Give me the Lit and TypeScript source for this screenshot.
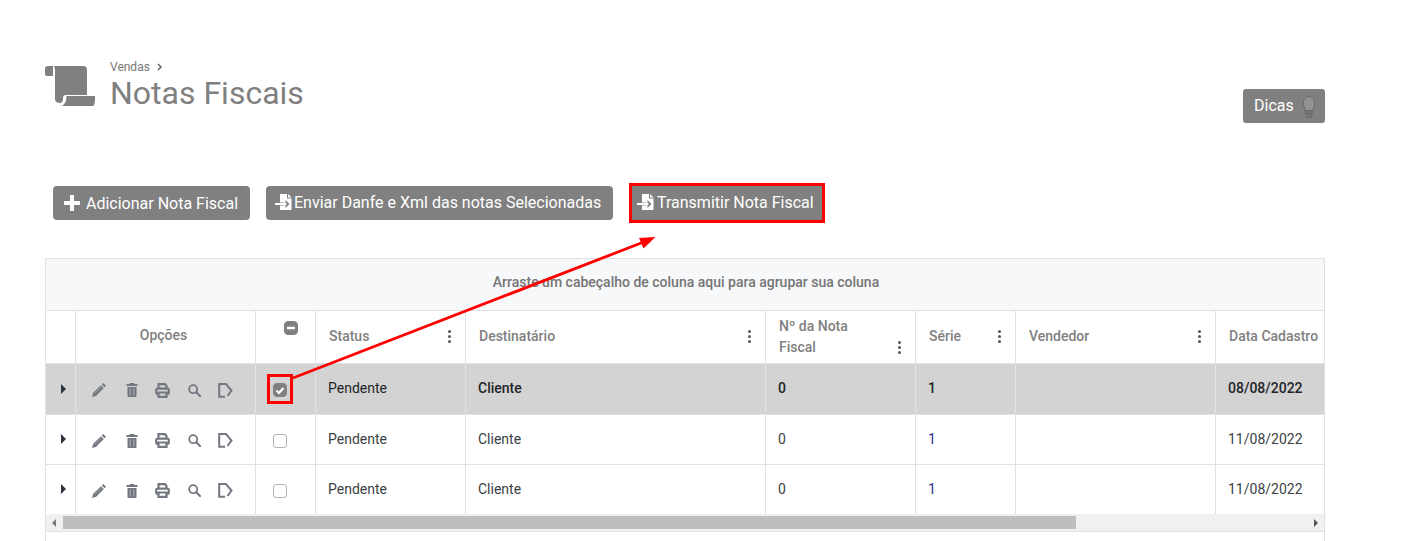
import { LitElement, html, css, svg } from "lit";
import { customElement } from "lit/decorators.js";

const docArrow = html`<svg class="docarrow" viewBox="0 0 18 18" width="18" height="18"><path fill="#fff" d="M5 1h7v4.500h4.500V17H5v-4.500h5.500V15l4-4-4-4v2.500H5z"/><path fill="#fff" d="M13 1l3.500 3.500H13z"/><path fill="#fff" d="M0 10h9V8.500L12 11l-3 2.500V12H0z"/></svg>`;
const plus = html`<svg viewBox="0 0 16 16" width="16" height="16"><path fill="#fff" d="M6 0h4v6h6v4h-6v6H6v-6H0V6h6z"/></svg>`;
const pencil = html`<svg viewBox="0 0 14 14" width="14" height="14"><path fill="#737780" d="M11.200 0L14 2.800l-1.400 1.400-2.800-2.800zM9 2.200l2.800 2.800L4.200 12.800 0 14l1.200-4.200z"/><path stroke="#a9acb2" stroke-width=".8" d="M2.500 10.500L9.800 3.500"/></svg>`;
const trash = html`<svg viewBox="0 0 12 14" width="12" height="14"><path fill="#737780" d="M4 0h4l.5 1H11.500v2H.5V1h3zM1.500 4h9v9a1 1 0 0 1-1 1h-7a1 1 0 0 1-1-1z"/><path stroke="#a5a9b0" stroke-width="1.200" d="M4.200 5.500v7M7.800 5.500v7"/></svg>`;
const printer = html`<svg viewBox="0 0 15 15" width="15" height="15"><path fill="none" stroke="#737780" stroke-width="2.200" d="M3.500 5.500V1.200h6.500L11.500 3v2.500M3.500 11H2.500A1.300 1.300 0 0 1 1.200 9.700V7A1.300 1.300 0 0 1 2.500 5.700h10A1.300 1.300 0 0 1 13.800 7v2.700A1.300 1.300 0 0 1 12.500 11h-1M3.500 9.500v4.400h8V9.500z"/></svg>`;
const search = html`<svg viewBox="0 0 13 13" width="13" height="13"><circle cx="5.200" cy="5.200" r="4" fill="none" stroke="#737780" stroke-width="1.800"/><path d="M8.300 8.300l3.700 3.700" stroke="#737780" stroke-width="2.200" stroke-linecap="round"/></svg>`;
const docEdit = html`<svg viewBox="0 0 15 15" width="15" height="15"><path fill="none" stroke="#737780" stroke-width="2" d="M7 13.800H1.200V1.100h6.800l5.500 6.400L9.500 13"/></svg>`;
const scrollIcon = html`<svg viewBox="0 0 50 40" width="50" height="40"><path fill="#808080" d="M3 0h5v10H2a2 2 0 0 1-2-2V3a3 3 0 0 1 3-3z"/><path fill="#808080" d="M9 0H38a4 4 0 0 1 4 4v25H21a3 3 0 0 0-3 3v1c0 2-1 4-3 4s-5-1-5-4V5c0-2-.5-4-1-5z"/><path fill="#808080" d="M21.500 30H50v4c0 2.500-1 5-1.500 6H17c3-2 4.500-5 4.500-10z"/></svg>`;
const bulb = html`<svg class="foot" viewBox="0 0 12 22" width="12" height="22"><path fill="#939393" stroke="#6a6a6a" d="M6 .5c3 0 5.500 2.500 5.500 6.500 0 3-1 5-1.500 7.500H2C1.500 12 .5 10 .5 7 .5 3 3 .5 6 .5z"/><path fill="#777" stroke="#6a6a6a" d="M2.500 15h7v2.500h-7zM3.500 18h5v3.500h-5z"/></svg>`;
const kebab = html`<span class="kebab"><i></i><i></i><i></i></span>`;

const rows = [
  { sel: true, date: "08/08/2022" },
  { sel: false, date: "11/08/2022" },
  { sel: false, date: "11/08/2022" },
];

@customElement("app-root")
export class AppRoot extends LitElement {
  static styles = css`
    :host {
      display: block;
      position: relative;
      height: 541px;
      overflow: hidden;
      box-sizing: border-box;
      padding: 0 86px 0 45px;
      font-family: Roboto, "Liberation Sans", sans-serif;
      color: #808080;
      background: #fff;
    }
    .top {
      display: flex;
      justify-content: space-between;
      align-items: flex-start;
      height: 186px;
      padding-top: 59px;
      box-sizing: border-box;
    }
    .brand { display: flex; gap: 15px; padding-top: 7px; }
    .brand svg { display: block; }
    .crumb { font-size: 12px; line-height: 14px; margin-top: -6px; display: flex; align-items: center; gap: 7px; color: #777; }
    .crumb svg { display: block; }
    h1 { margin: 0; font-size: 32px; line-height: 38px; font-weight: 400; color: #808080; }
    .tips {
      margin-top: 30px;
      width: 82px; height: 34px; box-sizing: border-box;
      background: #808080; color: #fff; border-radius: 3px;
      display: flex; align-items: center; justify-content: space-between;
      font-size: 16px; padding: 0 10px 2px 11px;
    }
    .foot { margin-top: 4px; flex: none; }
    .actions { display: flex; height: 34px; padding-left: 8px; margin-bottom: 38px; }
    .btn {
      display: flex; align-items: center; box-sizing: border-box; height: 34px;
      background: #808080; color: #fff; border-radius: 4px; font-size: 16px; white-space: nowrap;
    }
    .btn.add { width: 197px; padding-left: 11px; gap: 6px; margin-right: 16px; }
    .btn.send { width: 347px; padding: 0 0 2px 9px; gap: 1px; margin-right: 19px; }
    .btn.tx { width: 190px; padding: 0 0 2px 5px; gap: 2px; border-radius: 0; outline: 3px solid #f00; }
    .docarrow { flex: none; }
    .grid { border: 1px solid #dee2e6; border-bottom: none; height: 283px; box-sizing: border-box; overflow: hidden; }
    .group {
      height: 51px; background: #f7f8fa; border-bottom: 1px solid #dee2e6; box-sizing: content-box;
      display: flex; align-items: center; justify-content: center;
      font-size: 14px; font-weight: 500; color: #757575;
    }
    .group span { margin: 0 0 6px 2px; }
    .row {
      display: grid;
      grid-template-columns: 30px 180px 60px 150px 300px 150px 100px 200px 1fr;
      height: 50px;
    }
    .row.head { height: 53px; font-size: 14px; font-weight: 500; color: #808080; }
    .row.body { font-size: 14px; color: #3a3f45; }
    .row.sel { height: 51px; background: #d3d3d3; color: #212529; font-weight: 500; }
    .row.last { height: 49px; }
    .row.last .cell { border-bottom: none; }
    .cell {
      box-sizing: border-box; border-right: 1px solid #dee2e6; border-bottom: 1px solid #dee2e6;
      display: flex; align-items: center; padding: 0 12px; min-width: 0; white-space: nowrap; position: relative;
    }
    .cell:last-child { border-right: none; }
    .head .cell { padding: 0 13px 2px; }
    .head .opt { justify-content: center; padding: 0 4px 4px 0; }
    .head .name { flex: 1; }
    .head .da { padding-right: 0; overflow: hidden; }
    .head .nf { flex-direction: column; align-items: stretch; line-height: 21px; justify-content: center; padding-bottom: 0; }
    .nfl { display: flex; justify-content: space-between; align-items: center; }
    .body .cell { padding-bottom: 1px; }
    .sel .cell { padding-bottom: 2px; }
    .sel .plain { font-weight: 400; }
    .chk { justify-content: flex-start; }
    .head .chk { align-items: flex-start; padding: 10px 0 0 28px; }
    .body .chk { padding: 3px 0 0 17px; }
    .sel .chk { padding: 0 0 0 17px; }
    .kebab { display: flex; flex-direction: column; gap: 2px; margin-right: 1px; }
    .kebab i { width: 3px; height: 3px; border-radius: 50%; background: #555; display: block; }
    .box { width: 14px; height: 14px; box-sizing: border-box; border-radius: 3px; border: 1px solid #adb5bd; background: #fff; display: block; }
    .box.on { background: #808080; border-color: #808080; border-radius: 4px; display: flex; align-items: center; justify-content: center; }
    .mark { display: block; flex: none; }
    .wrap { display: block; }
    .sel .wrap { outline: 3px solid #f00; padding: 6px 3px 4px; margin-left: -3px; width: 14px; height: 14px; box-sizing: content-box; }
    .exp { padding: 0 0 1px 15px !important; }
    .tri { width: 0; height: 0; border-left: 5.500px solid #2b3440; border-top: 5px solid transparent; border-bottom: 5px solid transparent; display: block; }
    .icons { display: flex; align-items: center; padding: 2px 0 0 16px !important; }
    .icons span { display: flex; justify-content: center; flex: none; }
    .ico { width: 14px; margin-right: 18px; }
    .ico.t { margin-left: 2px; width: 12px; margin-right: 17px; }
    .ico.p { width: 15px; margin-right: 18px; }
    .ico.s { width: 13px; margin-right: 17px; }
    .ico.d { width: 15px; margin-right: 0; }
    .link { color: #2a2f8c; }
    .scroll { height: 17px; background: #f0f0f0; border-bottom: 1px solid #dee2e6; display: flex; align-items: center; }
    .sa { width: 0; height: 0; border-top: 4px solid transparent; border-bottom: 4px solid transparent; display: block; }
    .sa.l { border-right: 4px solid #777; margin-left: 6px; }
    .sa.r { border-left: 4px solid #555; margin-left: 238px; }
    .thumb { width: 1013px; height: 13px; background: #bdbdbd; margin-left: 7px; }
    .arrow { position: absolute; left: 0; top: 0; pointer-events: none; }
  `;

  render() {
    return html`
      <div class="top">
        <div class="brand">
          ${scrollIcon}
          <div>
            <div class="crumb">Vendas
              <svg viewBox="0 0 6 8" width="6" height="8"><path d="M1 1l3 3-3 3" fill="none" stroke="#666" stroke-width="1.500"/></svg>
            </div>
            <h1>Notas Fiscais</h1>
          </div>
        </div>
        <div class="tips">Dicas ${bulb}</div>
      </div>
      <div class="actions">
        <div class="btn add">${plus}Adicionar Nota Fiscal</div>
        <div class="btn send">${docArrow}Enviar Danfe e Xml das notas Selecionadas</div>
        <div class="btn tx">${docArrow}Transmitir Nota Fiscal</div>
      </div>
      <div class="grid">
        <div class="group"><span>Arraste um cabeçalho de coluna aqui para agrupar sua coluna</span></div>
        <div class="row head">
          <div class="cell"></div>
          <div class="cell opt">Opções</div>
          <div class="cell chk"><span class="box on"><svg class="mark" viewBox="0 0 14 14" width="14" height="14"><path d="M3 7h8" stroke="#fff" stroke-width="2.500"/></svg></span></div>
          <div class="cell"><span class="name">Status</span>${kebab}</div>
          <div class="cell"><span class="name">Destinatário</span>${kebab}</div>
          <div class="cell nf"><div>Nº da Nota</div><div class="nfl">Fiscal ${kebab}</div></div>
          <div class="cell"><span class="name">Série</span>${kebab}</div>
          <div class="cell"><span class="name">Vendedor</span>${kebab}</div>
          <div class="cell da">Data Cadastro</div>
        </div>
        ${rows.map(
          (r, i) => html`
            <div class="row body ${r.sel ? "sel" : ""} ${i === rows.length - 1 ? "last" : ""}">
              <div class="cell exp"><span class="tri"></span></div>
              <div class="cell icons"><span class="ico">${pencil}</span><span class="ico t">${trash}</span><span class="ico p">${printer}</span><span class="ico s">${search}</span><span class="ico d">${docEdit}</span></div>
              <div class="cell chk">
                <span class="wrap">
                  ${r.sel
                    ? html`<span class="box on"><svg class="mark" viewBox="0 0 14 14" width="14" height="14"><path d="M3.500 7.500l2.500 2.500 4.500-5" fill="none" stroke="#fff" stroke-width="2.200"/></svg></span>`
                    : html`<span class="box"></span>`}
                </span>
              </div>
              <div class="cell plain">Pendente</div>
              <div class="cell">Cliente</div>
              <div class="cell">0</div>
              <div class="cell ${r.sel ? "" : "link"}">1</div>
              <div class="cell"></div>
              <div class="cell">${r.date}</div>
            </div>
          `
        )}
        <div class="scroll"><span class="sa l"></span><div class="thumb"></div><span class="sa r"></span></div>
      </div>
      <svg class="arrow" width="1411" height="541" viewBox="0 0 1411 541">
        ${svg`<path d="M293 378L645 241.500" stroke="#f00" stroke-width="2.800" fill="none"/><path d="M655.500 237L639 238L643.500 248.500z" fill="#f00"/>`}
      </svg>
    `;
  }
}
